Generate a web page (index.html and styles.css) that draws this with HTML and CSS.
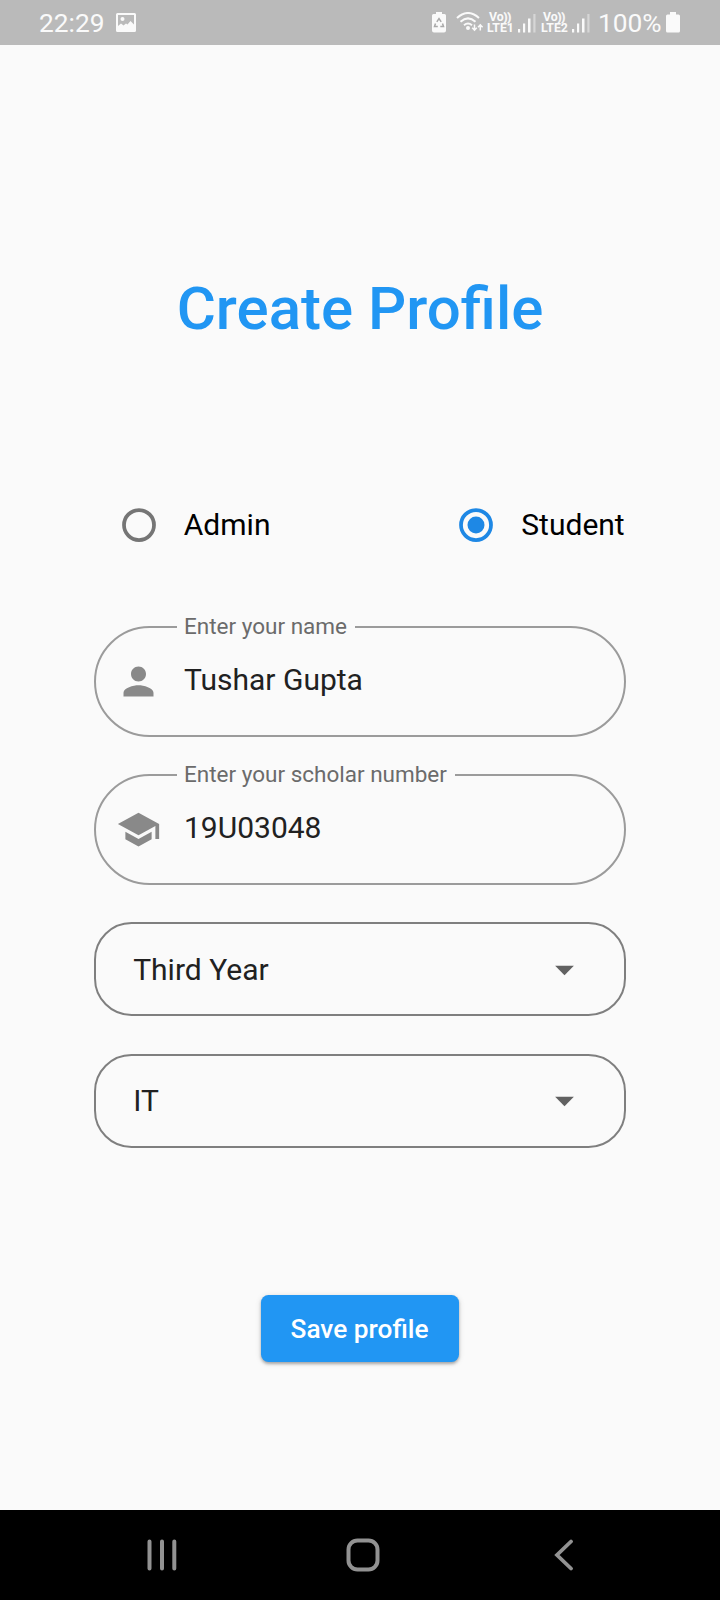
FILE: index.html
```html
<!DOCTYPE html>
<html lang="en">
<head>
<meta charset="utf-8">
<title>Create Profile</title>
<link rel="stylesheet" href="styles.css">
</head>
<body>
<header class="status">
  <span class="clock">22:29</span>
  <svg class="photo" width="20" height="20" viewBox="0 0 20 20"><path fill="#fafafa" fill-rule="evenodd" d="M1.500 0h17A1.500 1.500 0 0 1 20 1.500v16a1.500 1.500 0 0 1-1.500 1.500h-17A1.500 1.500 0 0 1 0 17.500v-16A1.500 1.500 0 0 1 1.500 0zM2 2v11l3-2.500 2.500 2 2.500-2 1.500 1L14.500 8l3.500 3.500V2z"/><circle cx="6.500" cy="6" r="2" fill="#fafafa"/></svg>
  <div class="indicators">
    <svg class="eco" width="14" height="21" viewBox="0 0 14 21"><path fill="#fafafa" d="M4 0h6v2h2.500Q14 2 14 3.500v15Q14 20.500 12 20.500H2Q0 20.500 0 18.500v-15Q0 2 1.500 2H4z"/><path d="M4.800 9.800 7 6.500l2.200 3.300M10.500 11.500l1 3H8.300M5.800 14.500H2.500l1-3" fill="none" stroke="#a9a9a9" stroke-width="1.500"/></svg>
    <svg class="wifi" width="28" height="21" viewBox="0 0 28 21"><g fill="none" stroke="#fafafa" stroke-width="2"><path d="M1 6Q12 -4 23 6"/><path d="M4.500 9.700Q12 3 19.500 9.700"/><path d="M8 13.200Q12 9.800 16 13.200"/></g><circle cx="12" cy="16" r="2" fill="#fafafa"/><path d="M18.500 12.500v5.500m-2.300-2.200 2.300 2.300 2.300-2.300M24.300 18.500v-5.500m-2.300 2.200 2.300-2.300 2.300 2.300" fill="none" stroke="#fafafa" stroke-width="1.500"/></svg>
    <div class="lte"><span class="volte">Vo<i>))</i></span><span>LTE1</span></div>
    <svg class="bars" width="18" height="20" viewBox="0 0 18 20"><path fill="#fafafa" d="M0 16h2.200v3.500H0zM5 10.500h2.200v9H5zM10 5.500h2.500v14H10z"/><path fill="#d6d6d6" d="M15.300 1h2.200v18.500h-2.200z"/></svg>
    <div class="lte lte-two"><span class="volte">Vo<i>))</i></span><span>LTE2</span></div>
    <svg class="bars" width="18" height="20" viewBox="0 0 18 20"><path fill="#fafafa" d="M0 16h2.200v3.500H0zM5 10.500h2.200v9H5zM10 5.500h2.500v14H10z"/><path fill="#d6d6d6" d="M15.300 1h2.200v18.500h-2.200z"/></svg>
    <span class="percent">100%</span>
    <svg class="battery" width="14" height="21" viewBox="0 0 14 21"><path fill="#fafafa" d="M4 0h6v2.500h2.500Q14 2.500 14 4v15Q14 20.500 12.500 20.500h-11Q0 20.500 0 19V4Q0 2.500 1.500 2.500H4z"/></svg>
  </div>
</header>
<main class="page">
  <h1 class="title">Create Profile</h1>
  <div class="roles">
    <div class="role"><svg class="radio" width="34" height="34" viewBox="0 0 34 34"><circle cx="17" cy="17" r="15" fill="none" stroke="#757575" stroke-width="3.750"/></svg><span>Admin</span></div>
    <div class="role"><svg class="radio" width="34" height="34" viewBox="0 0 34 34"><circle cx="17" cy="17" r="15" fill="none" stroke="#1e88e5" stroke-width="3.750"/><circle cx="17" cy="17" r="8.500" fill="#1e88e5"/></svg><span>Student</span></div>
  </div>
  <div class="field">
    <span class="label">Enter your name</span>
    <svg class="icon" width="45" height="45" viewBox="0 0 24 24"><path fill="#898989" d="M12 12c2.210 0 4-1.790 4-4s-1.790-4-4-4-4 1.790-4 4 1.790 4 4 4zm0 2c-2.670 0-8 1.340-8 4v2h16v-2c0-2.660-5.330-4-8-4z"/></svg>
    <span class="value">Tushar Gupta</span>
  </div>
  <div class="field">
    <span class="label">Enter your scholar number</span>
    <svg class="icon" width="45" height="45" viewBox="0 0 24 24"><path fill="#898989" d="M5 13.180v4L12 21l7-3.820v-4L12 17l-7-3.820zM12 3 1 9l11 6 9-4.910V17h2V9L12 3z"/></svg>
    <span class="value">19U03048</span>
  </div>
  <div class="select"><span>Third Year</span><svg width="45" height="45" viewBox="0 0 24 24"><path fill="#616161" d="M7 10l5 5 5-5z"/></svg></div>
  <div class="select"><span>IT</span><svg width="45" height="45" viewBox="0 0 24 24"><path fill="#616161" d="M7 10l5 5 5-5z"/></svg></div>
  <button class="save">Save profile</button>
</main>
<nav class="nav">
  <svg width="32" height="32" viewBox="0 0 32 32"><path d="M3.500 2.500v27M16 2.500v27M28.300 2.500v27" stroke="#929292" stroke-width="4" stroke-linecap="round"/></svg>
  <svg class="home" width="34" height="34" viewBox="0 0 34 34"><rect x="2.500" y="2.500" width="29" height="29" rx="9" fill="none" stroke="#929292" stroke-width="4"/></svg>
  <svg width="20" height="32" viewBox="0 0 20 32"><path d="M17 2.500 3 16l14 13.500" fill="none" stroke="#929292" stroke-width="3.800" stroke-linecap="round"/></svg>
</nav>
</body>
</html>
```

FILE: styles.css
```css
* { box-sizing: border-box; }
body {
  margin: 0;
  width: 720px;
  height: 1600px;
  display: flex;
  flex-direction: column;
  background: #fafafa;
  font-family: Roboto, sans-serif;
  overflow: hidden;
}
svg { display: block; flex: none; }

.status {
  height: 45px;
  flex: none;
  display: flex;
  align-items: flex-start;
  padding: 0 38px 0 39px;
  background: #bababa;
  color: #fafafa;
}
.clock, .percent { font-size: 26.3px; line-height: 46px; white-space: nowrap; }
.clock { width: 77px; }
.photo { margin-top: 13px; }
.indicators { display: flex; align-items: flex-start; margin-left: 296px; }
.eco { margin-top: 12px; }
.wifi { margin: 12px 0 0 10px; }
.lte {
  width: 27px;
  margin: 12px 0 0 3px;
  display: flex;
  flex-direction: column;
  font-size: 12.3px;
  font-weight: 700;
  line-height: 11px;
}
.lte-two { margin-left: 5px; }
.volte { padding-left: 2px; white-space: nowrap; }
.volte i { font-style: normal; font-size: 10.5px; -webkit-text-stroke: .4px #fafafa; }
.bars { margin: 13px 0 0 4px; }
.percent { margin-left: 8px; width: 66px; }
.battery { margin-top: 12px; margin-left: 2px; }

.page {
  height: 1465px;
  flex: none;
  display: flex;
  flex-direction: column;
  padding: 229px 94px 0 94px;
}
.title {
  margin: 0;
  color: #2196f3;
  font-size: 60px;
  line-height: 70px;
  font-weight: 500;
  text-align: center;
  white-space: nowrap;
}
.roles { display: flex; margin-top: 136px; height: 90px; }
.role {
  flex: none;
  width: 337.5px;
  display: flex;
  align-items: center;
  padding-left: 27.8px;
  gap: 28px;
  font-size: 30px;
  color: #000;
}
.role span { margin-top: -2px; }
.role:last-child { width: 195px; white-space: nowrap; }
.field {
  position: relative;
  height: 110.6px;
  flex: none;
  margin-bottom: 37.5px;
  display: flex;
  align-items: center;
  border: 2px solid #9b9b9b;
  border-radius: 56px;
  padding-left: 20.2px;
  gap: 22.8px;
}
.roles + .field { margin-top: 56px; }
.label {
  position: absolute;
  left: 81px;
  top: -16px;
  padding: 0 8.5px 0 7px;
  background: #fafafa;
  color: #6b6b6b;
  font-size: 22.5px;
  line-height: 28px;
  white-space: nowrap;
}
.value { font-size: 30px; line-height: 36px; color: #212121; margin-top: -3px; }
.select {
  height: 94px;
  flex: none;
  margin-bottom: 37.5px;
  display: flex;
  align-items: center;
  justify-content: space-between;
  border: 2px solid #7f7f7f;
  border-radius: 37.5px;
  padding: 0 37.5px 0 37.2px;
  font-size: 30px;
  color: #212121;
}
.save {
  align-self: center;
  margin-top: 109.5px;
  width: 198.5px;
  height: 67.5px;
  border: 0;
  border-radius: 7.5px;
  background: #2196f3;
  color: #fff;
  font: 500 26.25px Roboto, sans-serif;
  white-space: nowrap;
  padding: 2px 1px 0 0;
  box-shadow: 0 2px 3px rgba(0,0,0,.28), 0 1px 6px rgba(0,0,0,.12);
}

.nav {
  height: 90px;
  flex: none;
  display: flex;
  align-items: center;
  justify-content: space-between;
  padding: 0 146px 0 145.5px;
  background: #000;
}
.home { margin-right: 6px; }
```
